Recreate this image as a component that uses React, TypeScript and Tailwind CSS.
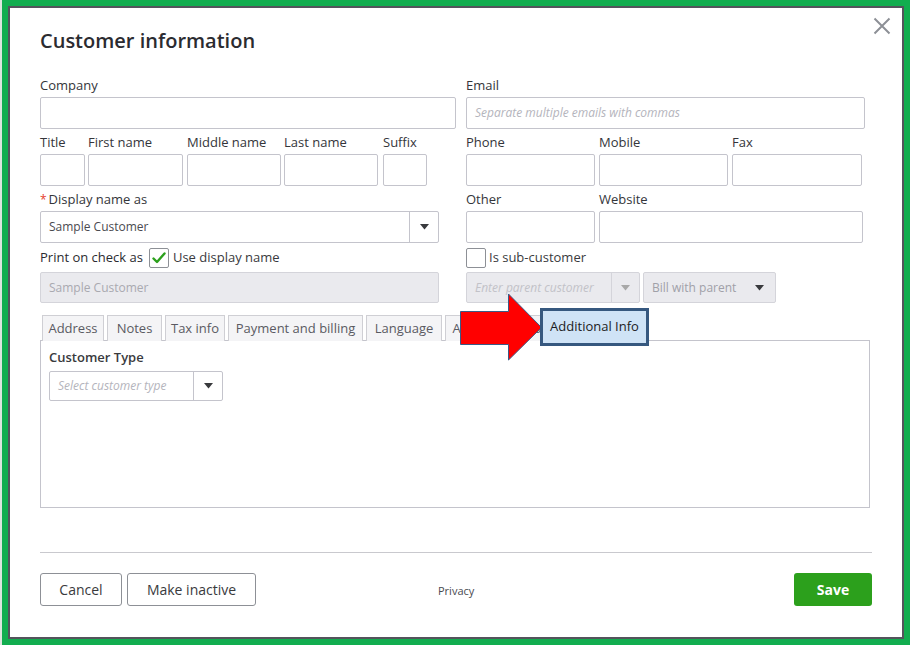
import React from "react";

const font = { fontFamily: "'Open Sans', Lato, 'Liberation Sans', sans-serif" };

function Field({ w, label, children }: { w: string; label?: React.ReactNode; children?: React.ReactNode }) {
  return (
    <div className={`flex flex-col ${w}`}>
      <div className="h-4 mb-1 text-[13px] leading-4 text-[#34353a] whitespace-nowrap">{label}</div>
      {children ?? <div className="h-8 border border-[#c4c4cc] rounded-[2px] bg-white" />}
    </div>
  );
}

function Caret({ light }: { light?: boolean }) {
  return (
    <svg width="9" height="6" viewBox="0 0 9 6">
      <path d="M0 0 L9 0 L4.5 5.5 Z" fill={light ? "#a8a8a8" : "#393a3d"} />
    </svg>
  );
}

function Check() {
  return (
    <svg width="14" height="12" viewBox="0 0 14 12">
      <path d="M1.5 6.5 L5 10 L12.5 1.5" fill="none" stroke="#2ca01c" strokeWidth="2.4" strokeLinecap="round" strokeLinejoin="round" />
    </svg>
  );
}

const tabs: [string, string][] = [
  ["Address", "w-[62px]"],
  ["Notes", "w-[55px]"],
  ["Tax info", "w-[60px]"],
  ["Payment and billing", "w-[135px]"],
  ["Language", "w-[76px]"],
  ["Additional Info", "w-[104px]"],
];

export default function App() {
  return (
    <div className="w-[910px] h-[645px] bg-[#dfe5df] pl-[2px]" style={font}>
      <div className="w-[908px] h-[645px] border-[6px] border-[#12ad4f]">
        <div className="relative w-full h-full border-2 border-[#54545c] bg-white px-[30px] pt-[19px]">
          {/* close button */}
          <svg className="absolute right-[11px] top-[9px]" width="18" height="18" viewBox="0 0 18 18">
            <path d="M1.5 1.5 L16.5 16.5 M16.5 1.5 L1.5 16.5" stroke="#8d9096" strokeWidth="2" />
          </svg>

          <h1 className="text-[20px] leading-7 text-[#2b2b30] font-semibold">Customer information</h1>

          {/* band 1 */}
          <div className="flex gap-[10px] mt-[22px]">
            <Field w="w-[416px]" label="Company" />
            <Field w="w-[399px]" label="Email">
              <div className="h-8 border border-[#c4c4cc] rounded-[2px] flex items-center px-2 text-[12px] italic text-[#b4b4bc]">
                Separate multiple emails with commas
              </div>
            </Field>
          </div>

          {/* band 2 */}
          <div className="flex gap-[10px] pt-[5px]">
            <div className="w-[416px] flex">
              <Field w="w-[45px]" label="Title" />
              <div className="w-[3px]" />
              <Field w="w-[95px]" label="First name" />
              <div className="w-[4px]" />
              <Field w="w-[94px]" label="Middle name" />
              <div className="w-[3px]" />
              <Field w="w-[94px]" label="Last name" />
              <div className="w-[5px]" />
              <Field w="w-[44px]" label="Suffix" />
            </div>
            <div className="w-[399px] flex gap-[4px]">
              <Field w="w-[129px]" label="Phone" />
              <Field w="w-[129px]" label="Mobile" />
              <Field w="w-[130px]" label="Fax" />
            </div>
          </div>

          {/* band 3 */}
          <div className="flex gap-[10px] pt-[5px]">
            <div className="w-[416px]">
              <Field
                w="w-[399px]"
                label={
                  <span>
                    <span className="text-[#e5412b] text-[12px] mr-[2px]">*</span>Display name as
                  </span>
                }
              >
                <div className="h-8 border border-[#c4c4cc] rounded-[2px] flex">
                  <div className="flex-1 flex items-center px-2 text-[12px] text-[#4a4a50]">Sample Customer</div>
                  <div className="w-[29px] border-l border-[#c4c4cc] flex items-center justify-center">
                    <Caret />
                  </div>
                </div>
              </Field>
            </div>
            <div className="w-[399px] flex gap-[4px]">
              <Field w="w-[129px]" label="Other" />
              <Field w="w-[264px]" label="Website" />
            </div>
          </div>

          {/* band 4 */}
          <div className="flex gap-[10px] h-[29px] items-center">
            <div className="w-[416px] flex items-center text-[13px] text-[#393a3d]">
              <span className="text-[#2b2b30]">Print on check as</span>
              <span className="ml-[6px] w-5 h-5 border border-[#8d9096] rounded-[2px] flex items-center justify-center">
                <Check />
              </span>
              <span className="ml-[4px]">Use display name</span>
            </div>
            <div className="w-[399px] flex items-center text-[13px] text-[#393a3d]">
              <span className="w-5 h-5 border border-[#8d9096] rounded-[2px]" />
              <span className="ml-[3px]">Is sub-customer</span>
            </div>
          </div>

          {/* band 5 */}
          <div className="flex gap-[10px]">
            <div className="w-[416px]">
              <div className="w-[399px] h-[31px] border border-[#d4d4da] rounded-[2px] bg-[#eaeaee] flex items-center px-2 text-[12px] text-[#a9a9b0]">
                Sample Customer
              </div>
            </div>
            <div className="flex gap-[3px]">
              <div className="w-[174px] h-[31px] border border-[#d4d4da] rounded-[2px] bg-[#eaeaee] flex">
                <div className="flex-1 flex items-center px-2 text-[12px] italic text-[#c2c2c8] whitespace-nowrap overflow-hidden">Enter parent customer</div>
                <div className="w-[28px] border-l border-[#d4d4da] flex items-center justify-center">
                  <Caret light />
                </div>
              </div>
              <div className="w-[133px] h-[31px] border border-[#d4d4da] rounded-[2px] bg-[#eaeaee] flex items-center justify-between pl-2 pr-[11px] text-[12px] text-[#a0a0a8]">
                <span>Bill with parent</span>
                <Caret />
              </div>
            </div>
          </div>

          {/* tabs */}
          <div className="relative mt-[12px]">
            <div className="flex gap-[3px] pl-[2px] h-[25px]">
              {tabs.map(([t, w]) => (
                <div
                  key={t}
                  className={`${w} h-[26px] border border-b-0 border-[#cfcfd4] bg-[#f4f4f6] text-[13px] text-[#5a5a62] flex items-center justify-center whitespace-nowrap`}
                >
                  {t}
                </div>
              ))}
            </div>
            <div className="w-[830px] h-[168px] border border-[#c4c4cc] px-[8px] pt-[8px]">
              <div className="text-[13px] leading-4 font-semibold text-[#393a3d]">Customer Type</div>
              <div className="mt-[6px] w-[174px] h-[30px] border border-[#c4c4cc] rounded-[2px] flex">
                <div className="flex-1 flex items-center px-2 text-[12px] italic text-[#b4b4bc]">Select customer type</div>
                <div className="w-[29px] border-l border-[#c4c4cc] flex items-center justify-center">
                  <Caret />
                </div>
              </div>
            </div>

            {/* pointer arrow */}
            <svg className="absolute left-[420px] top-[-22px]" width="84" height="68" viewBox="0 0 84 68">
              <path d="M0.5 18.5 L48.5 18.5 L48.5 1 L81.5 34.5 L48.5 67 L48.5 51.5 L0.5 51.5 Z" fill="#ff0000" stroke="#3a5a86" strokeWidth="1" />
            </svg>
            {/* highlighted tab */}
            <div className="absolute left-[500px] top-[-7px] w-[109px] h-[38px] border-[3px] border-[#36587f] bg-[#cfe3f6] flex items-center justify-center text-[13px] text-[#1c1c22] whitespace-nowrap">
              Additional Info
            </div>
          </div>

          {/* footer */}
          <div className="mt-[44px] w-[832px] border-t border-[#c9c9ce]" />
          <div className="mt-[20px] w-[832px] flex items-center">
            <button className="w-[82px] h-[33px] border border-[#8d9096] rounded-[3px] text-[14px] font-medium text-[#393a3d]">Cancel</button>
            <button className="ml-[5px] w-[129px] h-[33px] border border-[#8d9096] rounded-[3px] text-[14px] font-medium text-[#393a3d]">
              Make inactive
            </button>
            <div className="ml-[182px] text-[11px] text-[#4a4a50] pt-[3px]">Privacy</div>
            <div className="flex-1" />
            <button className="w-[78px] h-[33px] rounded-[3px] bg-[#2ca01c] text-[14px] font-bold text-white">Save</button>
          </div>
        </div>
      </div>
    </div>
  );
}
